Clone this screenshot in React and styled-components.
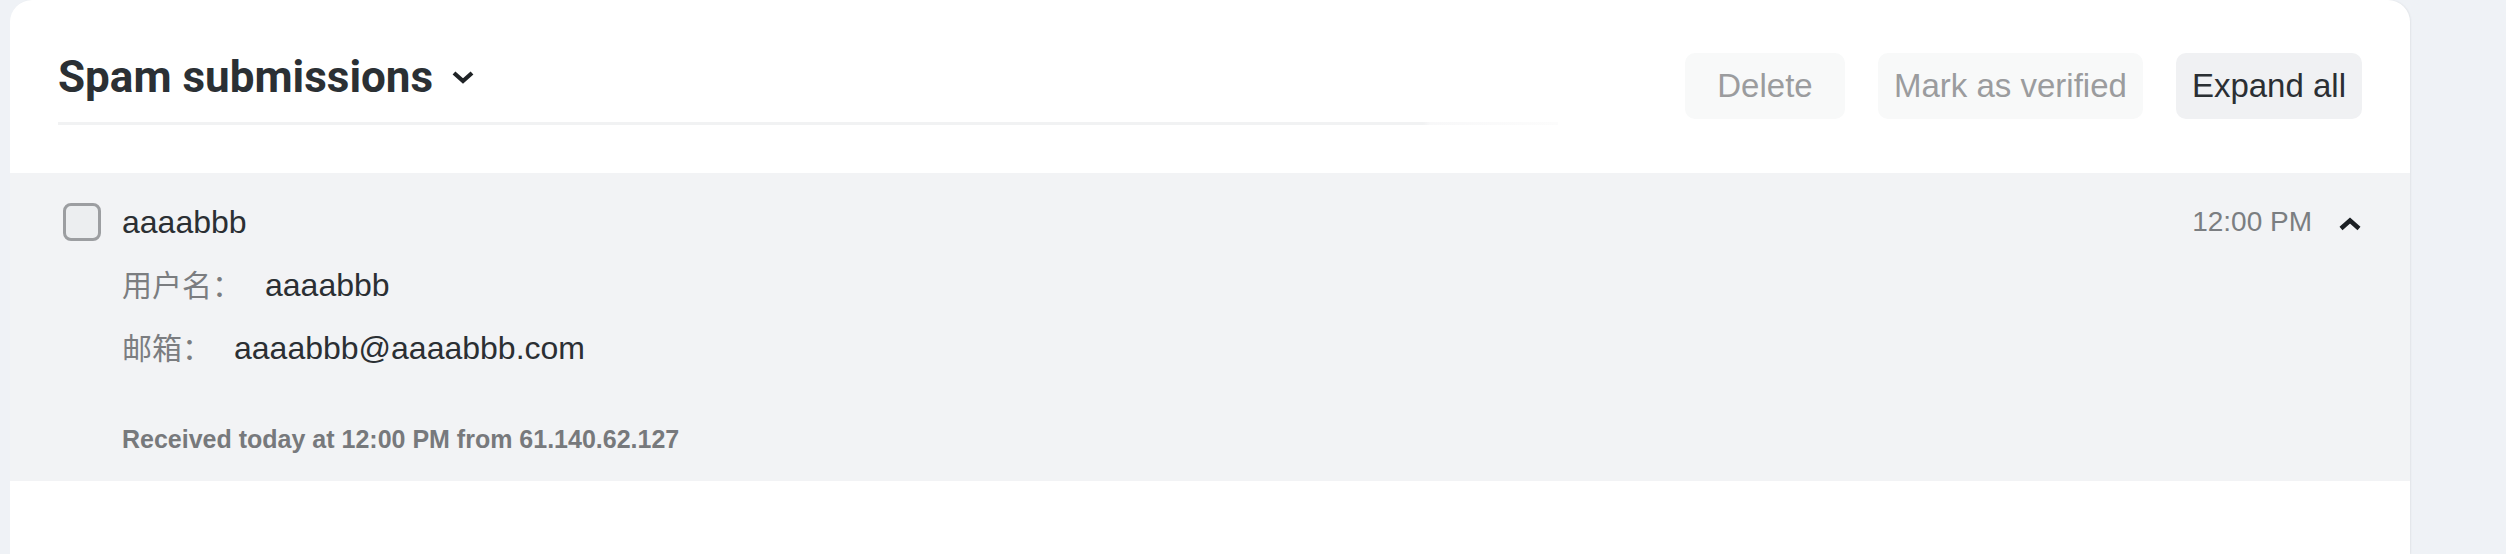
import React from "react";
import styled, { createGlobalStyle } from "styled-components";

const GlobalStyle = createGlobalStyle`
  html, body {
    margin: 0;
    padding: 0;
    background: #eff2f6;
    font-family: "Liberation Sans", Arial, "Noto Sans CJK SC", sans-serif;
    overflow: hidden;
  }
  * { box-sizing: border-box; }
`;

const Page = styled.div`
  display: flex;
  min-height: 554px;
  padding-left: 10px;
  background: #eff2f6;
`;

const Card = styled.section`
  width: 2400px;
  min-height: 554px;
  background: #ffffff;
  border-radius: 22px 22px 0 0;
  box-shadow: 1px 0 2px rgba(0, 0, 0, 0.06);
  display: flex;
  flex-direction: column;
`;

const Header = styled.header`
  height: 173px;
  display: flex;
  justify-content: space-between;
  align-items: flex-start;
  padding: 51px 48px 0 48px;
`;

const TitleColumn = styled.div`
  display: flex;
  flex-direction: column;
`;

const TitleRow = styled.div`
  display: flex;
  align-items: center;
  gap: 18px;
  height: 52px;
`;

const Title = styled.h1`
  margin: 0;
  font-family: Roboto, "Liberation Sans", sans-serif;
  font-weight: 700;
  font-size: 44px;
  line-height: 52px;
  color: #2b3034;
`;

const TitleRule = styled.div`
  margin-top: 19px;
  width: 1500px;
  height: 3px;
  background: linear-gradient(
    to right,
    #f1f2f3 0%,
    #f1f2f3 91%,
    #f8f8f9 91.5%,
    #fcfcfc 100%
  );
`;

const Actions = styled.div`
  display: flex;
  gap: 33px;
  margin-top: 2px;
`;

const ActionButton = styled.button`
  height: 66px;
  min-width: ${(p) => p.$minWidth || 0}px;
  padding: 0 16px;
  border: none;
  border-radius: 10px;
  font-family: "Liberation Sans", Arial, sans-serif;
  font-size: 33px;
  display: flex;
  align-items: center;
  justify-content: center;
  background: ${(p) => (p.$muted ? "#f8f9f9" : "#f0f1f3")};
  color: ${(p) => (p.$muted ? "#9b9c9e" : "#2b2f33")};
  cursor: ${(p) => (p.$muted ? "default" : "pointer")};
`;

const Item = styled.article`
  background: #f2f3f5;
  height: 308px;
  padding: 30px 48px 0 53px;
  display: flex;
  flex-direction: column;
`;

const ItemTop = styled.div`
  display: flex;
  align-items: center;
  height: 38px;
`;

const Check = styled.span`
  width: 38px;
  height: 38px;
  flex: none;
  border: 3px solid #9c9ea1;
  border-radius: 8px;
  background: #eceef0;
  margin-right: 21px;
`;

const Name = styled.span`
  font-size: 32px;
  line-height: 38px;
  color: #2b2f33;
  flex: 1;
`;

const Meta = styled.div`
  display: flex;
  align-items: center;
  gap: 26px;
`;

const Time = styled.span`
  font-size: 28px;
  line-height: 38px;
  color: #7b7e81;
`;

const Toggle = styled.svg`
  display: block;
  margin-top: 4px;
`;

const Fields = styled.div`
  margin-top: 13px;
  padding-left: 59px;
  display: flex;
  flex-direction: column;
`;

const FieldRow = styled.div`
  display: flex;
  align-items: baseline;
  font-size: 32px;
  line-height: 63px;
`;

const FieldLabel = styled.span`
  font-family: "Liberation Sans", "Noto Sans CJK SC", sans-serif;
  font-size: 30px;
  color: #7b7d80;
  margin-right: ${(p) => p.$gap}px;
`;

const FieldValue = styled.span`
  color: #2b2f33;
`;

const Footnote = styled.div`
  margin-top: 44px;
  padding-left: 59px;
  font-size: 25px;
  font-weight: 700;
  line-height: 30px;
  color: #77797c;
`;

const ChevronDown = () => (
  <svg width="24" height="14" viewBox="0 0 24 14" aria-hidden="true">
    <polyline
      points="3,3 12,11 21,3"
      fill="none"
      stroke="#1f2326"
      strokeWidth="4.2"
      strokeLinejoin="miter"
    />
  </svg>
);

const fields = [
  { label: "用户名：", value: "aaaabbb", gap: 23 },
  { label: "邮箱：", value: "aaaabbb@aaaabbb.com", gap: 22 },
];

export default function App() {
  return (
    <>
      <GlobalStyle />
      <Page>
        <Card>
          <Header>
            <TitleColumn>
              <TitleRow>
                <Title>Spam submissions</Title>
                <ChevronDown />
              </TitleRow>
              <TitleRule />
            </TitleColumn>
            <Actions>
              <ActionButton $muted $minWidth={160}>Delete</ActionButton>
              <ActionButton $muted>Mark as verified</ActionButton>
              <ActionButton>Expand all</ActionButton>
            </Actions>
          </Header>
          <Item>
            <ItemTop>
              <Check role="checkbox" aria-checked="false" />
              <Name>aaaabbb</Name>
              <Meta>
                <Time>12:00 PM</Time>
                <Toggle width="24" height="14" viewBox="0 0 24 14" aria-hidden="true">
                  <polyline
                    points="3,11.5 12,3.5 21,11.5"
                    fill="none"
                    stroke="#1c2024"
                    strokeWidth="4.5"
                    strokeLinejoin="miter"
                  />
                </Toggle>
              </Meta>
            </ItemTop>
            <Fields>
              {fields.map((f) => (
                <FieldRow key={f.label}>
                  <FieldLabel $gap={f.gap}>{f.label}</FieldLabel>
                  <FieldValue>{f.value}</FieldValue>
                </FieldRow>
              ))}
            </Fields>
            <Footnote>Received today at 12:00 PM from 61.140.62.127</Footnote>
          </Item>
        </Card>
      </Page>
    </>
  );
}
